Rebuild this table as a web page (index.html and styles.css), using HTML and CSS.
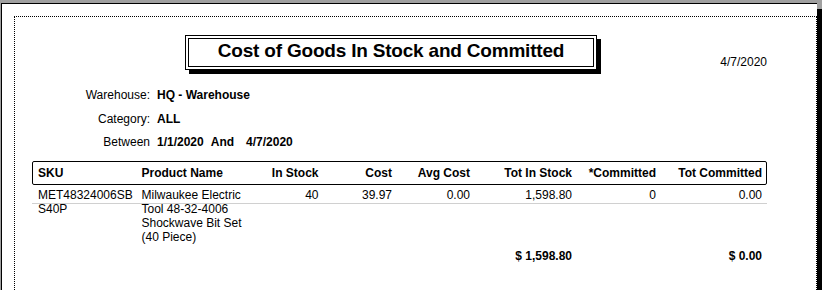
FILE: index.html
```html
<!DOCTYPE html>
<html>
<head>
<meta charset="utf-8">
<link rel="stylesheet" href="styles.css">
</head>
<body>
<div class="page">
  <div class="sheet">
    <div class="head">
      <div class="title-box"><div class="title-inner">Cost of Goods In Stock and Committed</div></div>
      <div class="date">4/7/2020</div>
    </div>
    <div class="filters">
      <div class="lbl">Warehouse:</div><div class="val">HQ - Warehouse</div>
      <div class="lbl">Category:</div><div class="val">ALL</div>
      <div class="lbl">Between</div>
      <div class="val range"><span>1/1/2020</span><span class="and">And</span><span class="to">4/7/2020</span></div>
    </div>
    <div class="grid thead">
      <div>SKU</div>
      <div>Product Name</div>
      <div class="num">In Stock</div>
      <div class="num">Cost</div>
      <div class="num">Avg Cost</div>
      <div class="num">Tot In Stock</div>
      <div class="num">*Committed</div>
      <div class="num">Tot Committed</div>
    </div>
    <div class="grid row">
      <div class="sku">MET48324006SBS40P</div>
      <div>Milwaukee Electric Tool 48-32-4006 Shockwave Bit Set (40 Piece)</div>
      <div class="num">40</div>
      <div class="num">39.97</div>
      <div class="num">0.00</div>
      <div class="num">1,598.80</div>
      <div class="num">0</div>
      <div class="num">0.00</div>
    </div>
    <div class="grid totals">
      <div></div>
      <div></div>
      <div></div>
      <div></div>
      <div></div>
      <div class="num">$ 1,598.80</div>
      <div></div>
      <div class="num">$ 0.00</div>
    </div>
  </div>
</div>
</body>
</html>
```

FILE: styles.css
```css
html, body {
  margin: 0;
  padding: 0;
}
body {
  background: #a0a0a0;
  height: 290px;
  overflow: hidden;
  font-family: "Liberation Sans", Arial, sans-serif;
  font-size: 12px;
  line-height: 14px;
  color: #000;
}
.page {
  box-sizing: border-box;
  margin: 3px 0 0 1px;
  width: 816px;
  height: 287px;
  background: #fff;
  border-left: 1px solid #000;
  border-top: 1px solid #000;
  box-shadow: 6px 6px 0 #000;
  padding: 12px 0 0 12px;
}
.sheet {
  box-sizing: border-box;
  height: 274px;
  border: 1px dotted #000;
  border-bottom: none;
  padding: 0 49px 0 17px;
}
.head {
  display: flex;
  align-items: flex-start;
  margin-top: 18px;
}
.title-box {
  box-sizing: border-box;
  margin-left: 153px;
  width: 412px;
  border: 1px solid #000;
  padding: 2px;
  background: #fff;
  box-shadow: 4px 4px 0 #000;
}
.title-inner {
  border: 1px solid #000;
  height: 23px;
  padding-bottom: 4px;
  line-height: 23px;
  text-align: center;
  font-size: 19px;
  font-weight: bold;
  letter-spacing: -0.2px;
}
.date {
  margin-left: auto;
  margin-top: 20px;
}
.filters {
  display: grid;
  grid-template-columns: 118px auto;
  column-gap: 7px;
  row-gap: 9.5px;
  margin-top: 18px;
}
.lbl {
  text-align: right;
}
.val {
  font-weight: bold;
}
.range .and {
  margin-left: 7px;
}
.range .to {
  margin-left: 12px;
}
.grid {
  display: grid;
  grid-template-columns: 103.5px 110px 67px 73.5px 78px 102px 84px 106px;
}
.num {
  text-align: right;
}
.thead {
  box-sizing: border-box;
  margin-top: 12px;
  height: 24px;
  border: 1px solid #000;
  border-radius: 2px;
  padding: 0 4px 0 5px;
  line-height: 22px;
  font-weight: bold;
}
.row {
  box-sizing: border-box;
  height: 19px;
  padding: 3px 5px 0 6px;
  border-bottom: 1px solid #d0d0d0;
}
.sku {
  max-width: 98px;
  word-break: break-all;
}
.totals {
  margin-top: 45px;
  padding: 0 5px 0 6px;
  font-weight: bold;
}
```
